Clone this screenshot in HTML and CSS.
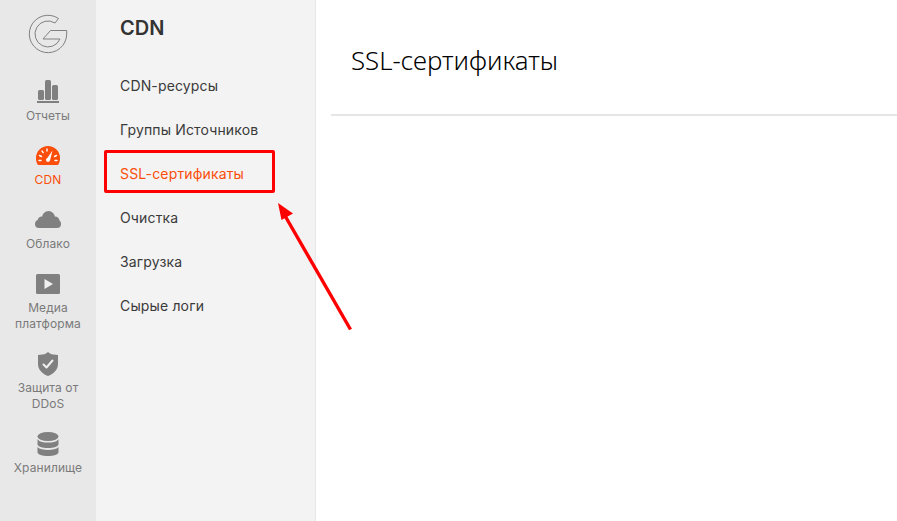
FILE: index.html
```html
<!DOCTYPE html>
<html lang="ru">
  <head>
    <meta charset="UTF-8" />
    <title>SSL-сертификаты</title>
    <link rel="stylesheet" href="styles.css">
  </head>
  <body>
    <nav class="rail">
      <div class="logo">
        <svg width="40" height="40" viewBox="0 0 40 40" fill="none" stroke="#808080" stroke-width="1">
          <path d="M30.5 4.5 A18.7 18.7 0 1 0 38.7 20 L38.7 16.5 L22.5 16.5 L15 25 L32 25 A13 13 0 1 1 27 9 Z" />
        </svg>
      </div>
      <a class="rail-item">
        <svg class="rail-icon" width="24" height="24" viewBox="0 0 24 24" fill="#808080">
          <rect x="2" y="10" width="6" height="10" rx="1.5" />
          <rect x="9" y="0" width="6" height="20" rx="1.5" />
          <rect x="16" y="5" width="6" height="15" rx="1.5" />
          <rect x="1" y="21" width="22" height="2" />
        </svg>
        <span>Отчеты</span>
      </a>
      <a class="rail-item active">
        <svg class="rail-icon" width="24" height="24" viewBox="0 0 24 24">
          <path fill="#fa4e0a" d="M12 2 A12 12 0 0 1 24 14 C24 17 23.4 19 22.4 20.4 C22 21 21.4 21 21 21 L3 21 C2.6 21 2 21 1.6 20.4 C0.6 19 0 17 0 14 A12 12 0 0 1 12 2 Z" />
          <path stroke="#fff" stroke-width="1.4" stroke-linecap="round" fill="none" d="M11 5 V7 M6 7 L7.2 8.6 M3.5 11.5 L5.5 12.5 M3 16.5 L5 16.5 M21 16.5 L19 16.5 M20.5 11.5 L18.5 12.5" />
          <path fill="#fff" d="M16.5 6.5 L14 16.5 C13.4 18.6 10 18.2 10 16 C10 15 10.6 14.4 11.4 14 Z" />
        </svg>
        <span>CDN</span>
      </a>
      <a class="rail-item">
        <svg class="rail-icon" width="26" height="24" viewBox="0 0 26 24" fill="#808080">
          <circle cx="13.5" cy="9.5" r="6.5" />
          <circle cx="7" cy="13" r="4.5" />
          <circle cx="20" cy="13" r="4.5" />
          <rect x="0" y="12" width="26" height="8" rx="4" />
        </svg>
        <span>Облако</span>
      </a>
      <a class="rail-item">
        <svg class="rail-icon" width="24" height="24" viewBox="0 0 24 24">
          <rect fill="#808080" x="0" y="2" width="24" height="20" rx="1.5" />
          <path fill="#f0f0f0" d="M8.5 7 L17 12 L8.5 17 Z" />
        </svg>
        <span>Медиа<br>платформа</span>
      </a>
      <a class="rail-item">
        <svg class="rail-icon" width="24" height="24" viewBox="0 0 24 24">
          <path fill="#808080" d="M12 0 L14 1.6 C16 2.6 19 3 22 3 L22 12 C22 18 17 22 12 24 C7 22 2 18 2 12 L2 3 C5 3 8 2.6 10 1.6 Z" />
          <path fill="none" stroke="#f0f0f0" stroke-width="2" stroke-linecap="round" stroke-linejoin="round" d="M7.5 12.5 L10.5 15.5 L16.5 8.5" />
        </svg>
        <span>Защита от<br>DDoS</span>
      </a>
      <a class="rail-item">
        <svg class="rail-icon" width="22" height="24" viewBox="0 0 22 24" fill="#808080">
          <ellipse cx="11" cy="4.5" rx="10.5" ry="4.5" />
          <path d="M0.5 7.2 C2.5 9.8 6.5 10.6 11 10.6 C15.5 10.6 19.5 9.8 21.5 7.2 L21.5 12 C21.5 14.6 16.5 16 11 16 C5.5 16 0.5 14.6 0.5 12 Z" />
          <path d="M0.5 15 C2.5 17.2 6.5 18 11 18 C15.5 18 19.5 17.2 21.5 15 L21.5 20 C21.5 22.6 16.5 24 11 24 C5.5 24 0.5 22.6 0.5 20 Z" />
        </svg>
        <span>Хранилище</span>
      </a>
    </nav>

    <aside class="submenu">
      <h2>CDN</h2>
      <ul>
        <li><a>CDN-ресурсы</a></li>
        <li><a>Группы Источников</a></li>
        <li><a class="current">SSL-сертификаты</a></li>
        <li><a>Очистка</a></li>
        <li><a>Загрузка</a></li>
        <li><a>Сырые логи</a></li>
      </ul>
    </aside>

    <main class="content">
      <h1>SSL-сертификаты</h1>
    </main>

    <!-- annotation drawn over the screenshot -->
    <div class="mark-box"></div>
    <svg class="mark-arrow" width="897" height="521" viewBox="0 0 897 521">
      <path d="M350.5 329.5 L284 214" stroke="#ff0000" stroke-width="3.4" fill="none" />
      <path d="M278 203 L281.5 220 L293 213.5 Z" fill="#ff0000" />
    </svg>
  </body>
</html>
```

FILE: styles.css
```css
body {
  margin: 0;
  display: flex;
  height: 521px;
  overflow: hidden;
  background-color: white;
  font-family: Inter, "Liberation Sans", sans-serif;
}

.rail {
  width: 96px;
  flex-shrink: 0;
  background-color: #e8e8e8;
  display: flex;
  flex-direction: column;
  align-items: center;
}

.logo {
  height: 80px;
  padding-top: 14px;
  box-sizing: border-box;
}

.logo svg {
  display: block;
}

.rail-item {
  display: flex;
  flex-direction: column;
  align-items: center;
  width: 100%;
  padding-bottom: 20px;
  font-size: 12px;
  line-height: 16px;
  letter-spacing: 0.1px;
  color: #7a7a7a;
  text-align: center;
}

.rail-icon {
  display: block;
  margin-bottom: 4px;
}

.rail-item.active {
  color: #fa4e0a;
}

.submenu {
  width: 219px;
  flex-shrink: 0;
  background-color: #f3f3f3;
  border-right: 1px solid #e8e8e8;
}

.submenu h2 {
  margin: 0;
  padding: 16px 0 0 24px;
  font-size: 20px;
  line-height: 24px;
  font-weight: 600;
  color: #333;
}

.submenu ul {
  list-style: none;
  margin: 0;
  padding: 24px 0 0 24px;
}

.submenu li {
  height: 44px;
  line-height: 44px;
  font-size: 14px;
  letter-spacing: 0.15px;
  color: #3a3a3a;
}

.submenu .current {
  color: #fa4e0a;
}

.content {
  flex: 1;
  padding-left: 15px;
}

.content h1 {
  margin: 0;
  height: 71px;
  padding: 43px 0 0 20px;
  border-bottom: 2px solid #e6e6e8;
  font-family: "Noto Sans", sans-serif;
  font-size: 25.8px;
  line-height: 34px;
  font-weight: 300;
  color: #000;
}

.mark-box {
  position: absolute;
  left: 104px;
  top: 150px;
  width: 165px;
  height: 37px;
  border: 3px solid #ff0000;
  border-radius: 2px;
}

.mark-arrow {
  position: absolute;
  left: 0;
  top: 0;
}
```
